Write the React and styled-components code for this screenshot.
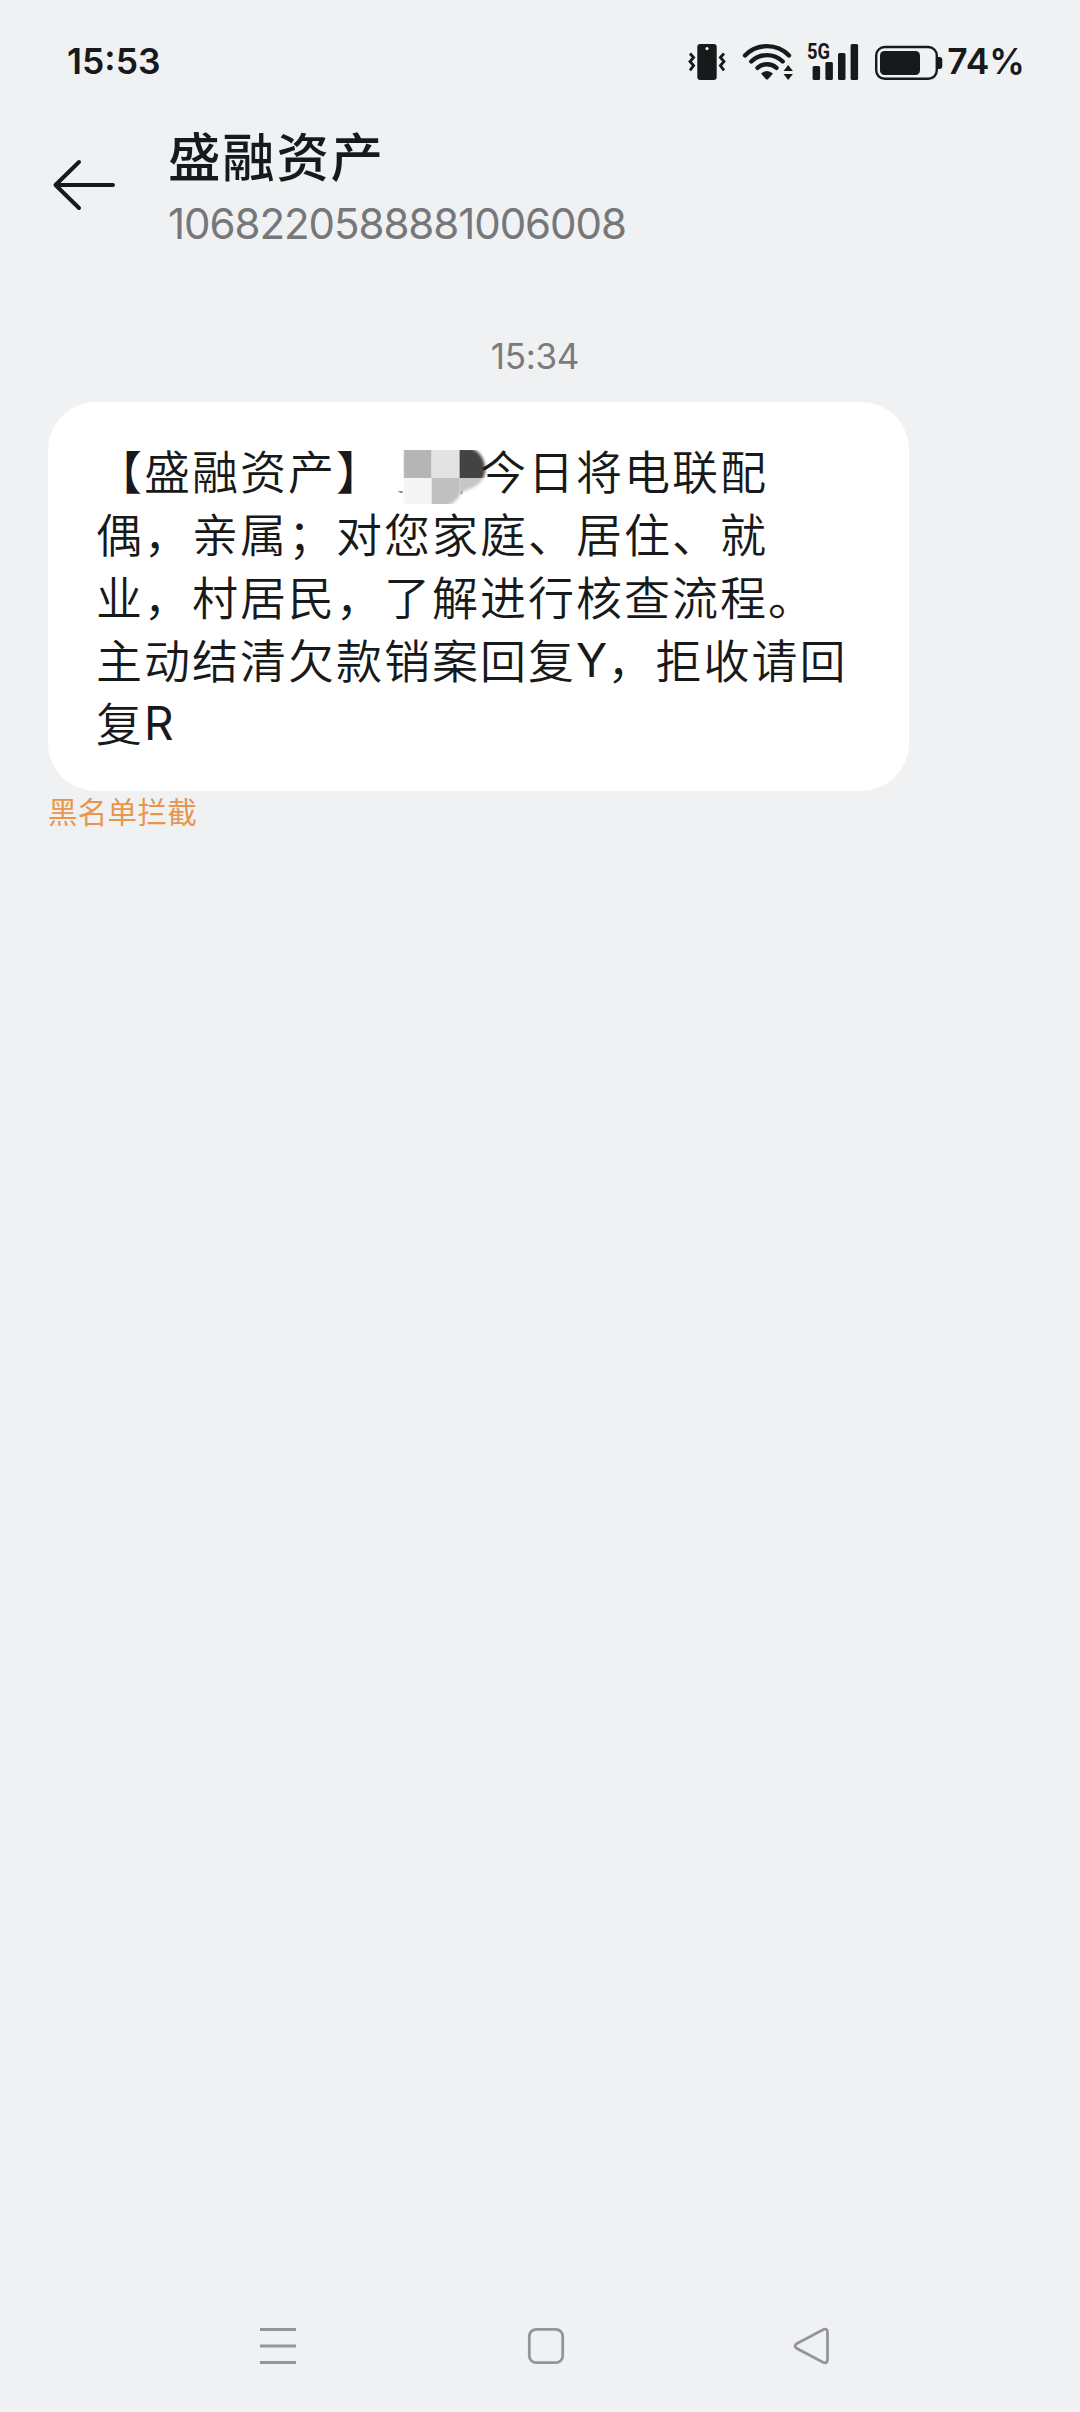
import React from 'react';
import styled, { createGlobalStyle } from 'styled-components';

const latin = "Inter, 'Noto Sans CJK SC', sans-serif";
const cjk = "'Noto Sans CJK SC', sans-serif";

const GlobalStyle = createGlobalStyle`
  * {
    box-sizing: border-box;
  }

  body {
    background-color: #eff1f3;
    color: #17191a;
    font-family: ${cjk};
    margin: 0;
  }
`;

const Screen = styled.div`
  display: flex;
  flex-direction: column;
  height: 2412px;
  overflow: hidden;
  width: 1080px;
`;

const StatusBar = styled.header`
  align-items: center;
  display: flex;
  height: 124px;
  justify-content: space-between;
  padding: 0 55px 0 67px;
`;

const StatusText = styled.span`
  font-family: ${latin};
  font-size: 35.5px;
  font-weight: 600;
  line-height: 40px;
`;

const StatusIcons = styled.div`
  align-items: center;
  display: flex;
`;

const Svg = styled.svg`
  display: block;
  flex: none;
  margin-right: ${props => props.gap || 0}px;
`;

const TitleBar = styled.div`
  align-items: center;
  display: flex;
  gap: 52px;
  height: 124px;
  padding-left: 52px;
`;

const TitleText = styled.div`
  display: flex;
  flex-direction: column;
  padding-top: 10px;
`;

const Name = styled.h1`
  font-size: 52.5px;
  font-weight: 500;
  letter-spacing: 1.7px;
  line-height: 66px;
  margin: 0;
`;

const Number = styled.p`
  color: #757779;
  font-family: ${latin};
  font-size: 42px;
  font-weight: 400;
  letter-spacing: -1.05px;
  line-height: 74px;
  margin: 0;
`;

const Thread = styled.main`
  display: flex;
  flex: 1;
  flex-direction: column;
  padding: 84px 48px 0;
`;

const Timestamp = styled.time`
  color: #797b7d;
  font-family: ${latin};
  font-size: 35px;
  font-weight: 400;
  letter-spacing: -0.3px;
  line-height: 48px;
  margin-bottom: 22px;
  padding-right: 10px;
  text-align: center;
`;

const Bubble = styled.section`
  background-color: #fff;
  border-radius: 48px;
  height: 389px;
  padding: 36px 48px;
  width: 861px;
`;

const Line = styled.p`
  align-items: center;
  display: flex;
  font-size: 46px;
  font-weight: 350;
  height: 63px;
  letter-spacing: 2px;
  line-height: 63px;
  margin: 0;
  white-space: pre;
`;

const Latin = styled.span`
  font-family: ${latin};
  font-size: 46px;
  font-weight: 400;
  letter-spacing: 0.3px;
  padding-top: 4px;
`;

const Blocked = styled.p`
  color: #e8954e;
  font-size: 29.5px;
  font-weight: 400;
  letter-spacing: 0.3px;
  line-height: 42px;
  margin: -2px 0 0;
`;

const NavBar = styled.nav`
  align-items: center;
  display: flex;
  height: 132px;
  justify-content: space-between;
  padding: 0 248px 0 258px;
`;

const VibrateIcon = () => (
  <Svg width="38" height="46" viewBox="688 39 38 46" gap={16}>
    <rect x="697.3" y="44" width="19.4" height="36" rx="3" fill="currentColor" />
    <circle cx="707" cy="48.6" r="1.6" fill="#eff1f3" />
    <path
      d="M690 53.5l3.6 4-3.6 4 3.6 4-3.6 4.8M724 53.5l-3.6 4 3.6 4-3.6 4 3.6 4.8"
      fill="none"
      stroke="currentColor"
      strokeWidth="2.8"
    />
  </Svg>
);

const WifiIcon = () => (
  <Svg width="52" height="46" viewBox="742 39 52 46" gap={13}>
    <g fill="none" stroke="currentColor" strokeLinecap="round" strokeWidth="4.4">
      <path d="M745 55.5a30.5 30.5 0 0 1 44 0" />
      <path d="M751.3 61.5a22.5 22.5 0 0 1 31.4 0" />
      <path d="M757.5 67.8a14.5 14.5 0 0 1 19 0" />
    </g>
    <path d="M761 73.5q6-5 12 0l-4.8 5.5q-1.2 1-2.4 0z" fill="currentColor" />
    <path d="M783.5 71l4.7-6 4.7 6zM783.5 74l4.7 6 4.7-6z" fill="currentColor" />
  </Svg>
);

const SignalIcon = () => (
  <Svg width="52" height="46" viewBox="807 39 52 46" gap={16} overflow="visible">
    <text
      x="807"
      y="58.5"
      fill="currentColor"
      fontFamily="Roboto, sans-serif"
      fontSize="21.5"
      fontWeight="700"
      textLength="23"
      lengthAdjust="spacingAndGlyphs"
    >
      5G
    </text>
    <g fill="currentColor">
      <rect x="812.6" y="66" width="7.5" height="14" rx="1.5" />
      <rect x="825.4" y="62" width="7.5" height="18" rx="1.5" />
      <rect x="838" y="53" width="7.5" height="27" rx="1.5" />
      <rect x="850.6" y="44" width="7.5" height="36" rx="1.5" />
    </g>
  </Svg>
);

const BatteryIcon = () => (
  <Svg width="68" height="46" viewBox="875 39 68 46" gap={4}>
    <rect x="876.2" y="47" width="60.6" height="31.8" rx="8.5" fill="none" stroke="currentColor" strokeWidth="2.4" />
    <rect x="880" y="51" width="40" height="24" rx="4.5" fill="currentColor" />
    <path d="M937 57h2.5q2.8 0 2.8 3v6q0 3-2.8 3H937z" fill="currentColor" />
  </Svg>
);

const BackArrow = () => (
  <Svg width="64" height="56" viewBox="52 158 64 56">
    <path
      d="M79 162L55.5 185l23.5 23M55.500 185H113"
      fill="none"
      stroke="currentColor"
      strokeLinecap="round"
      strokeLinejoin="round"
      strokeWidth="4"
    />
  </Svg>
);

// Pixelated smudge hiding the recipient's name, two characters wide
const Redaction = () => (
  <Svg width="96" height="63" viewBox="384.4 438 96 63" overflow="visible">
    <defs>
      <filter id="soft" x="-20%" y="-20%" width="140%" height="140%">
        <feGaussianBlur stdDeviation="1.5" />
      </filter>
      <mask id="brush" maskUnits="userSpaceOnUse" x="400" y="445" width="95" height="62">
        <path
          d="M403 448h67c10 2 15.500 11 15.500 22 0 10-7 17-23 22q-8 14-18 14h-35q-6-2-6.500-12z"
          fill="#fff"
          filter="url(#soft)"
        />
      </mask>
    </defs>
    <path d="M398 491h5v2h-2zM460.500 490h2.500v4h-2.500z" fill="#888" />
    <g mask="url(#brush)">
      <rect x="404" y="450" width="28" height="28" fill="#b5b5b5" />
      <rect x="432" y="450" width="28" height="28" fill="#e3e3e3" />
      <rect x="460" y="450" width="28" height="28" fill="#434343" />
      <rect x="404" y="478" width="28" height="26" fill="#f5f5f5" />
      <rect x="432" y="478" width="28" height="26" fill="#c0c0c0" />
      <rect x="460" y="478" width="28" height="26" fill="#c6c6c6" />
    </g>
  </Svg>
);

const navStroke = {
  fill: 'none',
  stroke: '#949597',
  strokeWidth: 2.8,
};

const App = () => (
  <>
    <GlobalStyle />
    <Screen>
      <StatusBar>
        <StatusText>15:53</StatusText>
        <StatusIcons>
          <VibrateIcon />
          <WifiIcon />
          <SignalIcon />
          <BatteryIcon />
          <StatusText>74%</StatusText>
        </StatusIcons>
      </StatusBar>
      <TitleBar>
        <BackArrow />
        <TitleText>
          <Name>盛融资产</Name>
          <Number>1068220588881006008</Number>
        </TitleText>
      </TitleBar>
      <Thread>
        <Timestamp>15:34</Timestamp>
        <Bubble>
          <Line>
            【盛融资产】
            <Redaction />
            今日将电联配
          </Line>
          <Line>偶，亲属；对您家庭、居住、就</Line>
          <Line>业，村居民，了解进行核查流程。</Line>
          <Line>
            主动结清欠款销案回复<Latin>Y</Latin>，拒收请回
          </Line>
          <Line>
            复<Latin>R</Latin>
          </Line>
        </Bubble>
        <Blocked>黑名单拦截</Blocked>
      </Thread>
      <NavBar>
        <Svg width="40" height="40" viewBox="0 0 40 40">
          <path d="M2 3.5h36M2 20h36M2 36.5h36" {...navStroke} />
        </Svg>
        <Svg width="40" height="40" viewBox="-1 0 40 40">
          <rect x="3.3" y="3.3" width="33.4" height="33.4" rx="7" {...navStroke} />
        </Svg>
        <Svg width="40" height="40" viewBox="0 0 40 40">
          <path d="M4.500 17.800L31 3.700Q35.500 2 35.500 6.500v27q0 4.500-4.500 2.800L4.500 22.200Q1.500 20 4.500 17.800z" {...navStroke} />
        </Svg>
      </NavBar>
    </Screen>
  </>
);

export default App;
